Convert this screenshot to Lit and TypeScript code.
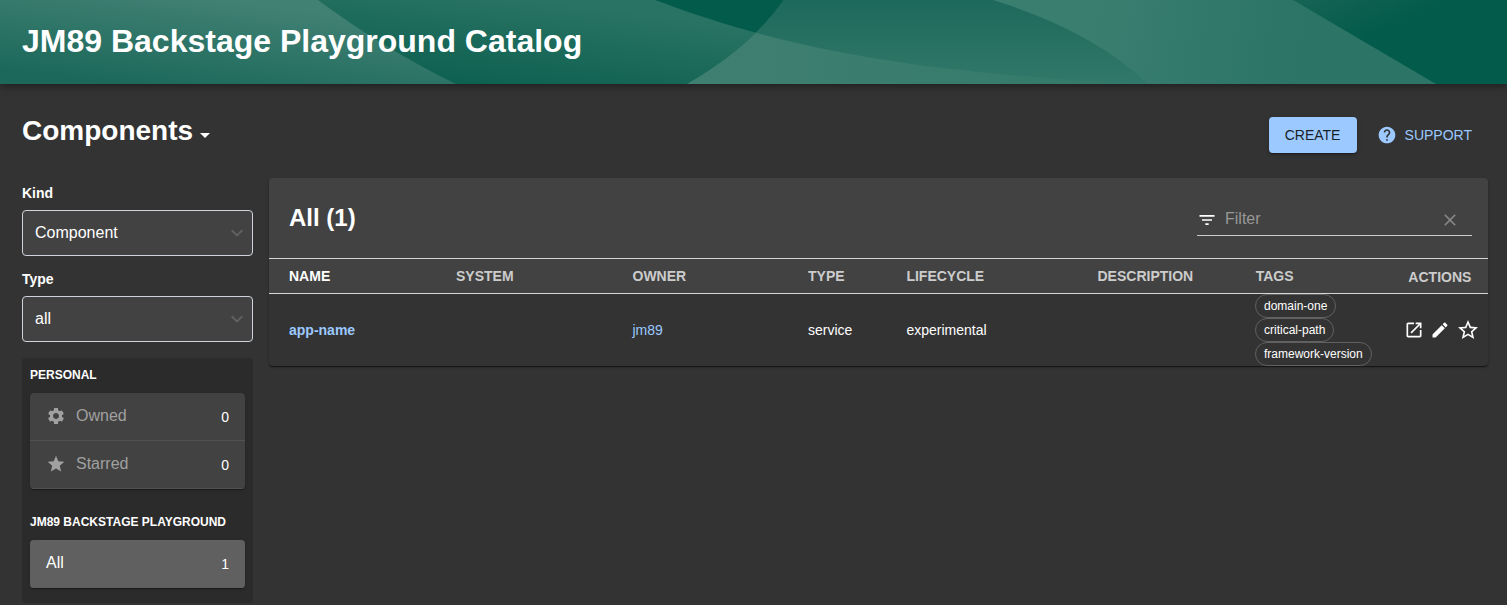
import { LitElement, html, css, svg } from "lit";
import { customElement } from "lit/decorators.js";

const icons = {
  settings: "M19.14 12.94c.04-.3.06-.61.06-.94 0-.32-.02-.64-.07-.94l2.03-1.58c.18-.14.23-.41.12-.61l-1.92-3.32c-.12-.22-.37-.29-.59-.22l-2.39.96c-.5-.38-1.03-.7-1.62-.94l-.36-2.54c-.04-.24-.24-.41-.48-.41h-3.84c-.24 0-.43.17-.47.41l-.36 2.54c-.59.24-1.13.57-1.62.94l-2.39-.96c-.22-.08-.47 0-.59.22L2.74 8.87c-.12.21-.08.47.12.61l2.03 1.58c-.05.3-.09.63-.09.94s.02.64.07.94l-2.03 1.58c-.18.14-.23.41-.12.61l1.92 3.32c.12.22.37.29.59.22l2.39-.96c.5.38 1.03.7 1.62.94l.36 2.54c.05.24.24.41.48.41h3.84c.24 0 .44-.17.47-.41l.36-2.54c.59-.24 1.13-.56 1.62-.94l2.39.96c.22.08.47 0 .59-.22l1.92-3.32c.12-.22.07-.47-.12-.61l-2.01-1.58zM12 15.6c-1.98 0-3.6-1.62-3.6-3.6s1.62-3.6 3.6-3.6 3.6 1.62 3.6 3.6-1.62 3.6-3.6 3.6z",
  star: "M12 17.27L18.18 21l-1.64-7.03L22 9.24l-7.19-.61L12 2 9.19 8.63 2 9.24l5.46 4.73L5.82 21z",
  starBorder: "M22 9.24l-7.19-.62L12 2 9.19 8.63 2 9.24l5.46 4.73L5.82 21 12 17.27 18.18 21l-1.63-7.03L22 9.24zM12 15.4l-3.76 2.27 1-4.28-3.32-2.88 4.38-.38L12 6.1l1.71 4.04 4.38.38-3.32 2.88 1 4.28L12 15.4z",
  help: "M12 2C6.48 2 2 6.48 2 12s4.48 10 10 10 10-4.48 10-10S17.52 2 12 2zm1 17h-2v-2h2v2zm2.07-7.75l-.9.92C13.45 12.9 13 13.5 13 15h-2v-.5c0-1.1.45-2.1 1.17-2.83l1.24-1.26c.37-.36.59-.86.59-1.41 0-1.1-.9-2-2-2s-2 .9-2 2H8c0-2.21 1.79-4 4-4s4 1.79 4 4c0 .88-.36 1.68-.93 2.25z",
  filter: "M10 18h4v-2h-4v2zM3 6v2h18V6H3zm3 7h12v-2H6v2z",
  clear: "M19 6.41L17.59 5 12 10.59 6.41 5 5 6.41 10.59 12 5 17.59 6.41 19 12 13.41 17.59 19 19 17.59 13.41 12z",
  open: "M19 19H5V5h7V3H5c-1.11 0-2 .9-2 2v14c0 1.1.89 2 2 2h14c1.1 0 2-.9 2-2v-7h-2v7zM14 3v2h3.59l-9.83 9.83 1.41 1.41L19 6.41V10h2V3h-7z",
  edit: "M3 17.25V21h3.75L17.81 9.94l-3.75-3.75L3 17.25zM20.71 7.04c.39-.39.39-1.02 0-1.41l-2.34-2.34c-.39-.39-1.02-.39-1.41 0l-1.83 1.83 3.75 3.75 1.83-1.83z",
  caret: "M7 10l5 5 5-5z",
};

const icon = (name: keyof typeof icons, size: number, cls = "") => html`
  <svg class="icon ${cls}" width=${size} height=${size} viewBox="0 0 24 24"><path d=${icons[name]}></path></svg>`;

const chevron = html`<svg class="chevron" width="12" height="8" viewBox="0 0 12 8"><path d="M.7 1.2L6 6.4L11.3 1.2"></path></svg>`;

const gradient = (id: string, x1: number, y1: number, x2: number, y2: number, from: string, to: string) => svg`
  <linearGradient id=${id} gradientUnits="userSpaceOnUse" x1=${x1} y1=${y1} x2=${x2} y2=${y2}>
    <stop offset="0" stop-color=${from}></stop><stop offset="1" stop-color=${to}></stop>
  </linearGradient>`;

@customElement("app-root")
export class AppRoot extends LitElement {
  static styles = css`
    :host { display: block; height: 605px; overflow: hidden; background: #333; color: #fff;
      font: 14px/20px "Liberation Sans", Arial, sans-serif; }
    * { box-sizing: border-box; }
    h1, h2, h3, h4 { margin: 0; font-weight: 700; }
    .icon { display: block; fill: currentColor; flex: none; }
    .banner { display: grid; height: 84px; box-shadow: 0 2px 8px rgba(0,0,0,.42); }
    .banner > * { grid-area: 1 / 1; }
    .waves { display: block; width: 1507px; height: 84px; }
    .title { padding: 22px 0 0 22px; font-size: 32px; line-height: 38px; z-index: 1; }
    .top { display: flex; height: 94px; padding: 30px 19px 0 22px; }
    .kindmenu { display: flex; flex: 1; }
    .kindmenu h2 { font-size: 28px; line-height: 34px; }
    .kindmenu .icon { margin-top: 9px; }
    .create { margin-top: 3px; width: 88px; height: 36px; border-radius: 4px; background: #9cc9ff; color: rgba(0,0,0,.87);
      text-align: center; line-height: 36px; box-shadow: 0 3px 1px -2px rgba(0,0,0,.2), 0 2px 2px rgba(0,0,0,.14), 0 1px 5px rgba(0,0,0,.12); }
    .support { display: flex; align-items: center; gap: 8px; height: 36px; margin: 3px 16px 0 20px; color: #9cc9ff; }
    .main { display: grid; grid-template-columns: 231px 1219px; gap: 16px; padding-left: 22px; align-items: start; }
    .label { font-size: 14px; line-height: 20px; padding-top: 5px; }
    .select { display: flex; align-items: center; justify-content: space-between; height: 46px; margin: 7px 0 8px;
      padding: 0 9px 0 12px; border: 1px solid #ced4da; border-radius: 4px; background: #424242; font-size: 16px; }
    .chevron { fill: none; stroke: #616161; stroke-width: 2; }
    .groups { margin-top: 16px; height: 245px; padding: 9px 8px 0; border-radius: 4px; background: #2b2b2b; }
    .groups h4 { font-size: 12px; line-height: 16px; white-space: nowrap; }
    .list { margin: 10px 0 25px; border-radius: 4px; background: #424242;
      box-shadow: 0 2px 1px -1px rgba(0,0,0,.2), 0 1px 1px rgba(0,0,0,.14), 0 1px 3px rgba(0,0,0,.12); overflow: hidden; }
    .row { display: flex; align-items: center; height: 48px; padding: 0 16px; border-bottom: 1px solid #515151; }
    .row .name { flex: 1; font-size: 16px; padding-bottom: 2px; color: #a0a0a0; }
    .row .icon { margin: 0 10px 1px 0; color: #a0a0a0; }
    .row .count { padding-top: 1px; }
    .row.selected { background: #606060; border-color: #606060; }
    .row.selected .name { color: #fff; }
    .card { border-radius: 4px; background: #333; overflow: hidden;
      box-shadow: 0 2px 1px -1px rgba(0,0,0,.3), 0 1px 1px rgba(0,0,0,.3), 0 1px 3px rgba(0,0,0,.2); }
    .toolbar { display: flex; height: 80px; padding: 0 16px 0 20px; background: #424242; justify-content: space-between; }
    .toolbar h3 { font-size: 24px; line-height: 28px; padding-top: 26px; }
    .filter { display: flex; align-items: center; width: 275px; height: 34px; margin-top: 24px; padding-top: 3px; border-bottom: 1px solid #ccc; }
    .filter .hint { flex: 1; padding: 0 0 2px 8px; font-size: 16px; color: #989898; }
    .filter .icon.dim { margin-right: 12px; color: #858585; }
    .grid { display: grid; grid-template-columns: 187px 176.5px 175.5px 98.4px 191.1px 158.2px 145.3px 87px; }
    .head { height: 36px; border: solid #d6d6d6; border-width: 1px 0; background: #424242; line-height: 34px; font-weight: 700; color: #ccc; }
    .grid > * { white-space: nowrap; }
    .grid > :first-child { padding-left: 20px; }
    .sorted { color: #fff; }
    .head .last { padding: 1px 0 0 7.4px; }
    .body { height: 72px; align-items: center; }
    .link { color: #9cc9ff; }
    .strong { font-weight: 700; }
    .tags { display: flex; flex-direction: column; align-items: flex-start; margin-left: -.7px; }
    .chip { height: 24px; padding: 0 8px; border: 1px solid #616161; border-radius: 12px; font-size: 12px; line-height: 22px; }
    .actions { display: flex; align-items: center; padding-left: 3px; }
    .actions .icon { margin-right: 6px; }
    .actions .icon:last-child { margin: 0; }
  `;

  render() {
    return html`
      <header class="banner">
        <svg class="waves" viewBox="0 0 1507 84">
          <defs>
            ${gradient("a", 190, -5, 178, 90, "#418174", "#1c695b")}
            ${gradient("b", 500, -5, 488, 90, "#297364", "#0d6050")}
            ${gradient("c", 900, 0, 900, 84, "#1d695b", "#31786a")}
            ${gradient("d", 700, 84, 1150, 84, "#3f7f71", "#327a6a")}
            ${gradient("e", 1090, 30, 1300, 60, "#3a7e70", "#2b7466")}
            ${gradient("f", 1300, -10, 1330, 55, "#186556", "#035b4b")}
            <clipPath id="lens"><path d="M784 0Q750 48 687 84H1148Q1093 31 993 0Z"></path></clipPath>
          </defs>
          <rect width="1507" height="84" fill="#035b4b"></rect>
          <path fill="url(#b)" d="M300 0H655C760 39 880 72 1148 84H300Z"></path>
          <path fill="url(#a)" d="M0 0H318Q384 49 456 84H0Z"></path>
          <path fill="url(#f)" d="M1280 0H1507V84H1420Z"></path>
          <path fill="url(#e)" d="M980 0H1293L1436 84H1120Z"></path>
          <path fill="url(#d)" d="M784 0Q750 48 687 84H1148Q1093 31 993 0Z"></path>
          <path fill="url(#c)" clip-path="url(#lens)" d="M655 0C760 39 880 72 1148 84V0Z"></path>
        </svg>
        <h1 class="title">JM89 Backstage Playground Catalog</h1>
      </header>
      <section class="top">
        <div class="kindmenu"><h2>Components</h2>${icon("caret", 24)}</div>
        <div class="create">CREATE</div>
        <div class="support">${icon("help", 20)}<span>SUPPORT</span></div>
      </section>
      <main class="main">
        <aside>
          ${[["Kind", "Component"], ["Type", "all"]].map(([label, value]) => html`
            <h4 class="label">${label}</h4>
            <div class="select"><span>${value}</span>${chevron}</div>`)}
          <div class="groups">
            <h4>PERSONAL</h4>
            <div class="list">
              <div class="row">${icon("settings", 20)}<span class="name">Owned</span><span class="count">0</span></div>
              <div class="row">${icon("star", 20)}<span class="name">Starred</span><span class="count">0</span></div>
            </div>
            <h4>JM89 BACKSTAGE PLAYGROUND</h4>
            <div class="list">
              <div class="row selected"><span class="name">All</span><span class="count">1</span></div>
            </div>
          </div>
        </aside>
        <section class="card">
          <div class="toolbar">
            <h3>All (1)</h3>
            <div class="filter">${icon("filter", 20)}<span class="hint">Filter</span>${icon("clear", 20, "dim")}</div>
          </div>
          <div class="grid head">
            <span class="sorted">NAME</span><span>SYSTEM</span><span>OWNER</span><span>TYPE</span>
            <span>LIFECYCLE</span><span>DESCRIPTION</span><span>TAGS</span><span class="last">ACTIONS</span>
          </div>
          <div class="grid body">
            <span class="link strong">app-name</span><span></span><span class="link">jm89</span><span>service</span>
            <span>experimental</span><span></span>
            <div class="tags">${["domain-one", "critical-path", "framework-version"].map((t) => html`<span class="chip">${t}</span>`)}</div>
            <div class="actions">${icon("open", 20)}${icon("edit", 20)}${icon("starBorder", 24)}</div>
          </div>
        </section>
      </main>`;
  }
}
